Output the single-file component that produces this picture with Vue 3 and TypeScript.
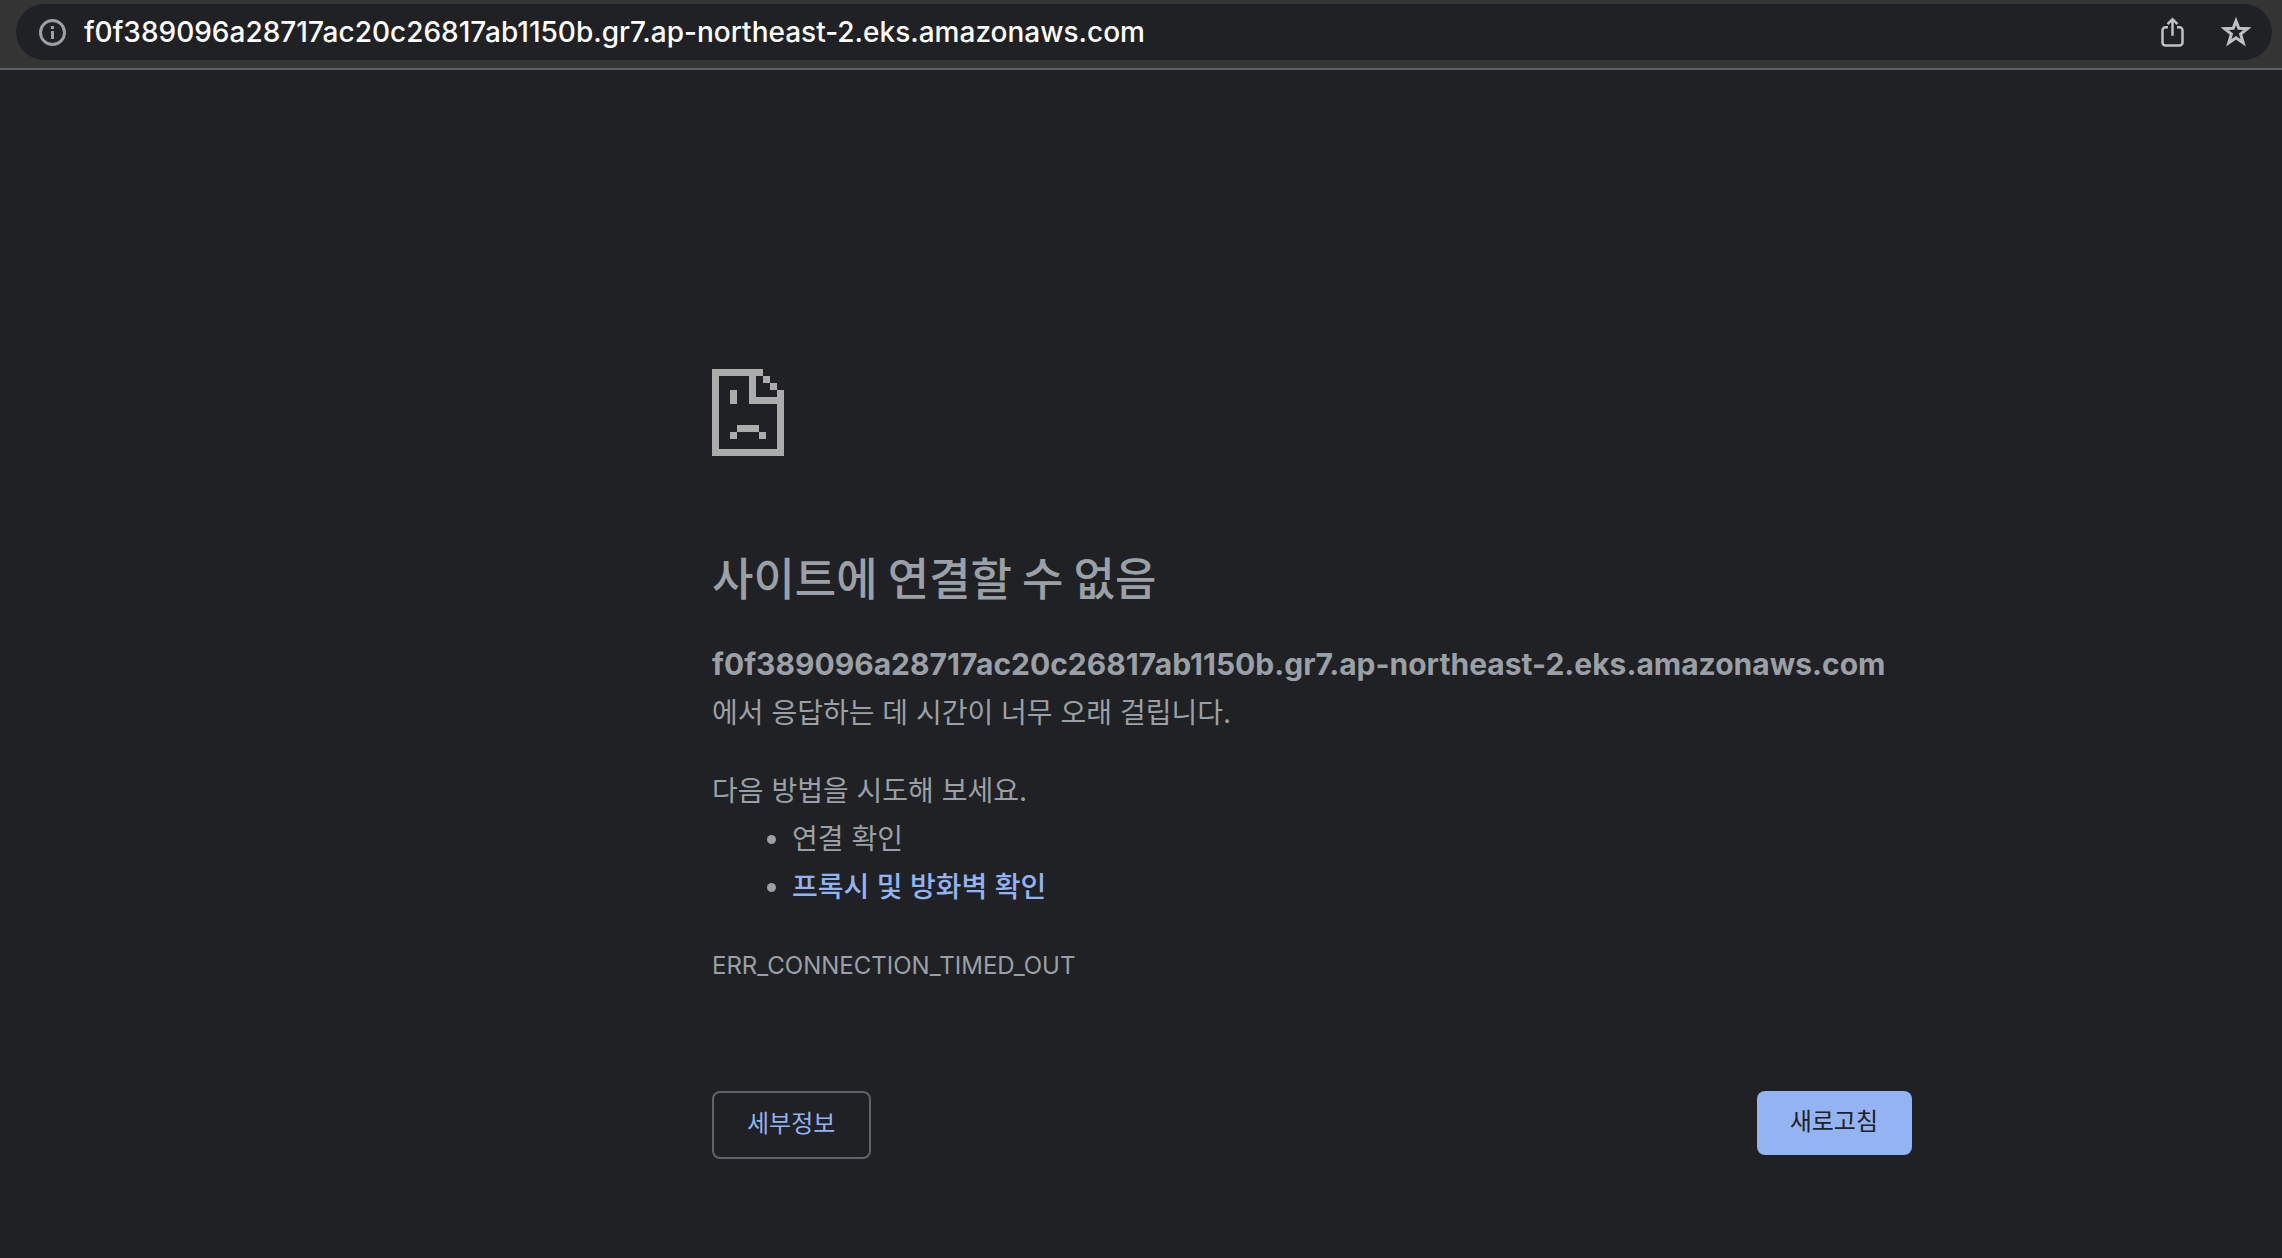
<script setup lang="ts">
import { ref } from 'vue'

const host = 'f0f389096a28717ac20c26817ab1150b.gr7.ap-northeast-2.eks.amazonaws.com'
const address = ref<string>(host)
</script>

<template>
  <div class="browser">
    <header class="toolbar">
      <form class="omnibox" @submit.prevent>
        <button class="icon-button" type="button" aria-label="사이트 정보 보기">
          <svg width="28" height="28" viewBox="0 0 28 28" fill="none">
            <circle cx="14.500" cy="14.500" r="12" stroke="#9aa0a6" stroke-width="3" />
            <path d="M13 8h3v3h-3zM13 13h3v8h-3z" fill="#9aa0a6" />
          </svg>
        </button>
        <input v-model="address" class="address" type="text" aria-label="주소창" spellcheck="false" />
        <button class="icon-button share" type="button" aria-label="페이지 공유">
          <svg width="24" height="30" viewBox="0 0 24 30" fill="none" stroke="#c0c0c0" stroke-width="2.5">
            <path d="M8 10.200H5.500a3 3 0 0 0-3 3V25.500a3 3 0 0 0 3 3H19.500a3 3 0 0 0 3-3V13.200a3 3 0 0 0-3-3H17" />
            <path d="M12.500 18.800V3M7.500 7.200L12.500 2.200L17.500 7.200" />
          </svg>
        </button>
        <button class="icon-button" type="button" aria-label="북마크에 추가">
          <svg width="30" height="30" viewBox="0 0 30 30" fill="none" stroke="#c0c0c0" stroke-width="3">
            <path d="M15 4L17.800 11.300L26.300 11.700L19.600 17L22.200 25.800L15 20.800L7.800 25.800L10.400 17L3.700 11.700L12.200 11.300Z" />
          </svg>
        </button>
      </form>
    </header>

    <main class="page">
      <section class="error">
        <svg class="sad-page" width="72" height="87" viewBox="0 0 72 87" fill="#acacac" shape-rendering="crispEdges" aria-hidden="true">
          <path d="M0 0H51V7H44V28H65V21H72V87H0ZM7 7V80H65V35H37V7Z" fill-rule="evenodd" />
          <path d="M51 7h7v7h-7zM58 14h7v7h-7zM18 21h7v14h-7zM25 56h22v7H25zM18 63h7v7h-7zM47 63h7v7h-7z" />
        </svg>
        <h1>사이트에 연결할 수 없음</h1>
        <p class="summary"><strong>{{ host }}</strong><br />에서 응답하는 데 시간이 너무 오래 걸립니다.</p>
        <div class="suggestions">
          <p>다음 방법을 시도해 보세요.</p>
          <ul>
            <li>연결 확인</li>
            <li><a href="#buttons">프록시 및 방화벽 확인</a></li>
          </ul>
        </div>
        <p class="code">ERR_CONNECTION_TIMED_OUT</p>
        <div id="buttons" class="actions">
          <button class="details" type="button">세부정보</button>
          <button class="reload" type="button">새로고침</button>
        </div>
      </section>
    </main>
  </div>
</template>

<style>
body {
  margin: 0;
  background: #202124;
}
</style>

<style scoped>
.browser {
  min-height: 100vh;
  background: #202124;
  color: #9aa0a6;
  font-family: Inter, "Noto Sans CJK KR", sans-serif;
}

.toolbar {
  padding: 4px 10px 8px 16px;
  background: #353535;
  border-bottom: 2px solid #5f6061;
}

.omnibox {
  display: flex;
  align-items: center;
  height: 56px;
  padding: 0 21px 0 22px;
  border-radius: 28px;
  background: #202124;
}

.icon-button {
  display: flex;
  padding: 0;
  border: 0;
  background: none;
}

.share {
  margin-right: 37px;
}

.address {
  flex: 1;
  min-width: 0;
  padding: 0;
  margin-left: 18px;
  border: 0;
  outline: 0;
  background: none;
  color: #fff;
  font: 500 28px/40px Inter, sans-serif;
}

.page {
  display: grid;
  grid-template-columns: 712fr minmax(0, 1200px) 370fr;
  padding: 299px 0 48px;
}

.error {
  grid-column: 2;
  font-size: 28px;
  line-height: 48px;
}

.sad-page {
  display: block;
}

h1 {
  margin: 91px 0 33px;
  font-family: "Noto Sans CJK KR", sans-serif;
  font-size: 45px;
  font-weight: 500;
  line-height: 60px;
}

p {
  margin: 0;
}

strong {
  font-size: 30px;
  font-weight: 700;
}

.suggestions {
  margin-top: 30px;
}

ul {
  margin: 0;
  padding-left: 80px;
}

a {
  color: #94b3f3;
  font-weight: 500;
  text-decoration: none;
}

.code {
  margin-top: 31px;
  font-size: 24px;
}

.actions {
  display: flex;
  justify-content: space-between;
  align-items: flex-start;
  margin-top: 101px;
}

.actions button {
  border-radius: 8px;
  font: 400 24px/36px Inter, "Noto Sans CJK KR", sans-serif;
}

.details {
  padding: 13px 34px 15px 33px;
  border: 2px solid #5f6368;
  background: #202124;
  color: #94b3f3;
}

.reload {
  padding: 13px 34px 15px 33px;
  border: 0;
  background: #94b3f3;
  color: #202124;
}
</style>
